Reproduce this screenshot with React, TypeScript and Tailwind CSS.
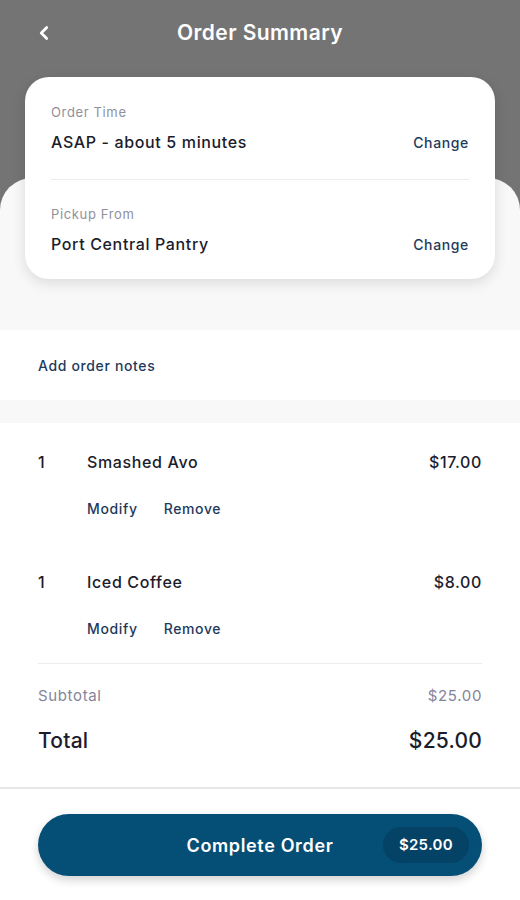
import { ChevronLeft } from 'lucide-react';

const items = [
  { qty: 1, name: 'Smashed Avo', price: '$17.00' },
  { qty: 1, name: 'Iced Coffee', price: '$8.00' },
];

function InfoRow({ label, value, border }: { label: string; value: string; border?: boolean }) {
  return (
    <div className={border ? 'border-t border-[#ececec] pt-[25px] pb-[24px]' : 'pt-[26px] pb-[26px]'}>
      <p className="text-[13px] leading-[18px] text-[#8f909c]">{label}</p>
      <div className="mt-[10px] flex items-center justify-between">
        <p className="text-[16px] leading-[22px] font-medium text-[#1b1c2c]">{value}</p>
        <button className="text-[14px] leading-[22px] font-medium text-[#1e3a5c] translate-y-[1px]">
          Change
        </button>
      </div>
    </div>
  );
}

export default function App() {
  return (
    <div
      className="min-h-screen w-[520px] bg-[#f8f8f8] tracking-[0.04em]"
      style={{ fontFamily: 'Inter, "Noto Sans", sans-serif' }}
    >
      <header className="h-[210px] bg-[#747474]">
        <div className="relative flex h-[66px] items-center justify-center">
          <button className="absolute left-[33px] top-[22px] text-white">
            <ChevronLeft size={22} strokeWidth={3} />
          </button>
          <h1 className="text-[21px] font-semibold tracking-[0.02em] text-white">Order Summary</h1>
        </div>
      </header>

      <div className="flow-root -mt-[32px] rounded-t-[32px] bg-[#f8f8f8]">
        <div className="relative mx-[25px] -mt-[101px] mb-[51px] rounded-[24px] bg-white px-[26px] shadow-[0_4px_14px_rgba(0,0,0,0.12)]">
          <InfoRow label="Order Time" value="ASAP - about 5 minutes" />
          <InfoRow label="Pickup From" value="Port Central Pantry" border />
        </div>

        <div className="flex h-[70px] items-center bg-white px-[38px]">
          <button className="text-[14px] font-medium text-[#1e3a5c]">Add order notes</button>
        </div>

        <div className="mt-[23px] bg-white">
          <div className="px-[38px] pt-[27px]">
            {items.map((it, i) => (
              <div key={it.name} className={i > 0 ? 'mt-[51px]' : ''}>
                <div className="flex items-center text-[16px] leading-[24px] font-medium text-[#1b1c2c]">
                  <span className="w-[49px]">{it.qty}</span>
                  <span className="flex-1">{it.name}</span>
                  <span>{it.price}</span>
                </div>
                <div className="mt-[25px] flex gap-[26px] pl-[49px] text-[14px] leading-[20px] font-medium text-[#1e3a5c]">
                  <button>Modify</button>
                  <button>Remove</button>
                </div>
              </div>
            ))}
            <div className="mt-[24px] border-t border-[#ececec]" />
            <div className="mt-[22px] flex justify-between text-[15px] leading-[20px] text-[#84859a]">
              <span>Subtotal</span>
              <span>$25.00</span>
            </div>
            <div className="mt-[21px] flex justify-between text-[21px] leading-[28px] font-medium tracking-[0.01em] text-[#1b1c2c]">
              <span>Total</span>
              <span>$25.00</span>
            </div>
          </div>
          <div className="mt-[32px] border-t-2 border-[#e6e6e6]" />
          <div className="px-[38px] pt-[25px] pb-[25px]">
            <button className="relative flex h-[62px] w-full items-center justify-center rounded-full bg-[#054e75] shadow-[0_4px_10px_rgba(0,0,0,0.18)]">
              <span className="text-[18px] font-semibold text-white">Complete Order</span>
              <span className="absolute right-[13px] top-[13px] flex h-[36px] items-center rounded-full bg-[#044266] px-[16px] text-[15px] font-semibold tracking-[0.02em] text-white">
                $25.00
              </span>
            </button>
          </div>
        </div>
      </div>
    </div>
  );
}
